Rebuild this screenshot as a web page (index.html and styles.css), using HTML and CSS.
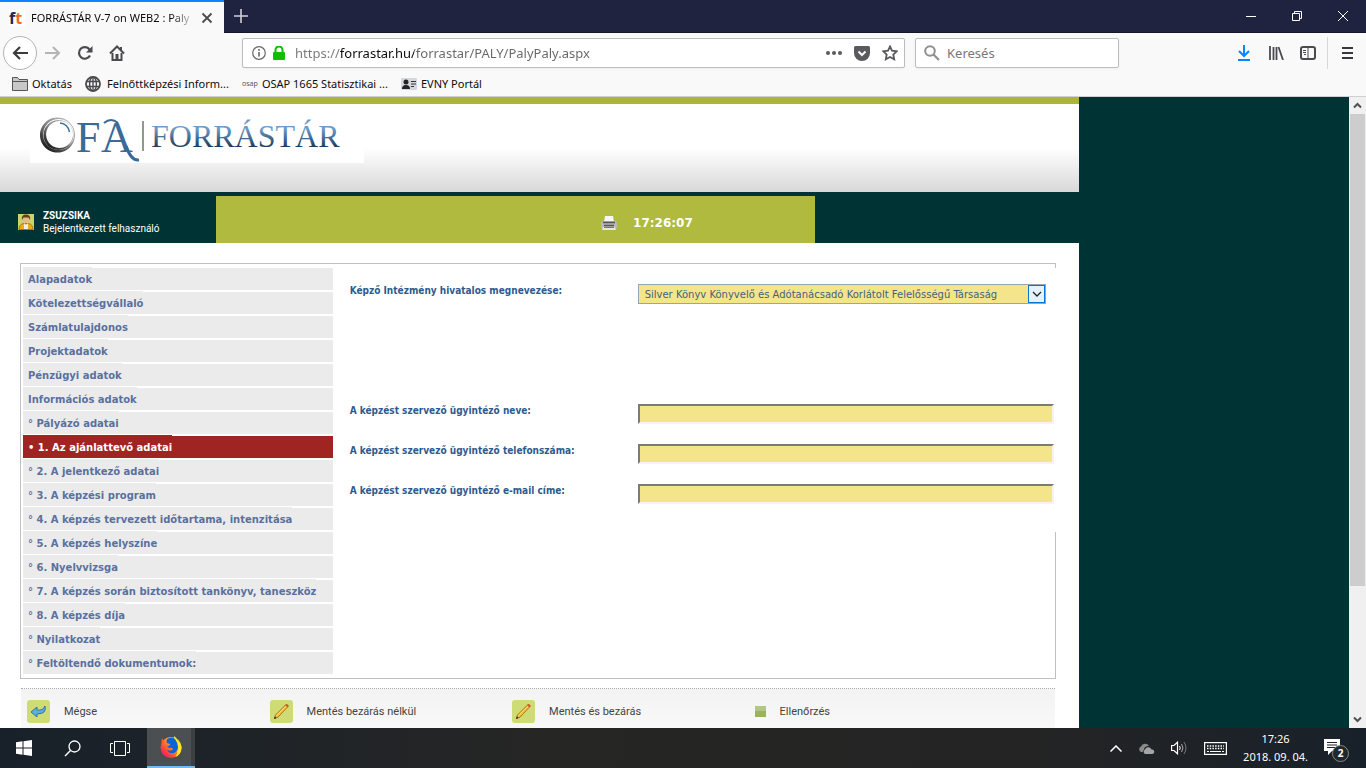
FILE: index.html
```html
<!DOCTYPE html>
<html lang="hu">
<head>
<meta charset="utf-8">
<title>FORRÁSTÁR V-7 on WEB2 : PalyPaly</title>
<link rel="stylesheet" href="styles.css">
</head>
<body>
<header class="titlebar">
  <div class="tab">
    <span class="favicon"><b class="fav-f">f</b><b class="fav-t">t</b></span>
    <span class="tab-title">FORRÁSTÁR V-7 on WEB2 : Paly</span>
    <button class="tab-close" aria-label="Lap bezárása"><svg width="12" height="12" viewBox="0 0 12 12"><path d="M1.500 1.500l9 9M10.500 1.500l-9 9" stroke="#4a4a4f" stroke-width="1.800" fill="none"/></svg></button>
  </div>
  <button class="new-tab" aria-label="Új lap"><svg width="14" height="14" viewBox="0 0 14 14"><path d="M7 0v14M0 7h14" stroke="#d0d0d8" stroke-width="1.600"/></svg></button>
  <div class="window-buttons">
    <button aria-label="Kis méret"><svg width="10" height="10" viewBox="0 0 10 10"><path d="M0 5.500h10" stroke="#fff"/></svg></button>
    <button aria-label="Előző méret"><svg width="10" height="10" viewBox="0 0 10 10"><path d="M.5 2.500h7v7h-7zM2.500 2V.5h7v7H8" stroke="#fff" fill="none"/></svg></button>
    <button aria-label="Bezárás"><svg width="10" height="10" viewBox="0 0 10 10"><path d="M0 0l10 10M10 0L0 10" stroke="#fff"/></svg></button>
  </div>
</header>
<nav class="toolbar">
  <button class="back" aria-label="Vissza"><svg width="16" height="16" viewBox="0 0 16 16"><path d="M16 8H2M8 2L2 8l6 6" fill="none" stroke="#3c3c40" stroke-width="2.200"/></svg></button>
  <button class="tool" aria-label="Előre"><svg width="16" height="16" viewBox="0 0 16 16"><path d="M0 8h14M8 2l6 6-6 6" fill="none" stroke="#b4b4b6" stroke-width="2"/></svg></button>
  <button class="tool" aria-label="Frissítés"><svg width="16" height="16" viewBox="0 0 16 16"><path d="M13 10.500A5.800 5.800 0 1 1 12.500 4.500" fill="none" stroke="#4a4a4f" stroke-width="2.200"/><path d="M15.500 1v6.500H9z" fill="#4a4a4f"/></svg></button>
  <button class="tool" aria-label="Kezdőlap"><svg width="16" height="16" viewBox="0 0 16 16"><path d="M1 8.500L8 1.500l7 7" fill="none" stroke="#4a4a4f" stroke-width="2"/><path d="M3.500 8v7h9V8M12 2v3" fill="none" stroke="#4a4a4f" stroke-width="2"/><path d="M6.500 9h3v5h-3z" fill="#4a4a4f"/></svg></button>
  <div class="urlbar">
    <svg width="14" height="14" viewBox="0 0 14 14"><circle cx="7" cy="7" r="6.300" fill="none" stroke="#66666a" stroke-width="1.200"/><path d="M7 6v4.500M7 3v1.700" stroke="#66666a" stroke-width="1.600"/></svg>
    <svg width="12" height="14" viewBox="0 0 12 14"><rect y="6" width="12" height="8" rx="1" fill="#12bc00"/><path d="M2.500 7V4a3.500 3.500 0 0 1 7 0v3" fill="none" stroke="#12bc00" stroke-width="2"/></svg>
    <input class="url" type="text" value="https://forrastar.hu/forrastar/PALY/PalyPaly.aspx" aria-label="Cím">
    <svg width="16" height="4" viewBox="0 0 16 4"><g fill="#5a5a5e"><circle cx="2" cy="2" r="2"/><circle cx="8" cy="2" r="2"/><circle cx="14" cy="2" r="2"/></g></svg>
    <svg width="16" height="15" viewBox="0 0 16 15"><path d="M1.500 0h13Q16 0 16 1.500V7a8 8 0 0 1-16 0V1.500Q0 0 1.500 0z" fill="#5a5a5e"/><path d="M4.500 5.500L8 9l3.500-3.500" fill="none" stroke="#fff" stroke-width="2"/></svg>
    <svg width="16" height="16" viewBox="0 0 16 16"><path d="M8 1.500l2 4.200 4.700.6-3.400 3.200.9 4.800L8 12l-4.200 2.300.9-4.800L1.300 6.300 6 5.700z" fill="none" stroke="#5a5a5e" stroke-width="1.800"/></svg>
  </div>
  <div class="searchbar">
    <svg width="16" height="16" viewBox="0 0 16 16"><circle cx="6" cy="6" r="4.800" fill="none" stroke="#8f8f92" stroke-width="2"/><path d="M9.500 9.500L15 15" stroke="#8f8f92" stroke-width="2.200"/></svg>
    <input type="search" placeholder="Keresés" aria-label="Keresés">
  </div>
  <div class="tools-right">
    <button aria-label="Letöltések"><svg width="12" height="16" viewBox="0 0 12 16"><path d="M6 0v11M1 6l5 5 5-5M0 15h12" fill="none" stroke="#0a84ff" stroke-width="2"/></svg></button>
    <button aria-label="Könyvtár"><svg width="15" height="14" viewBox="0 0 15 14"><path d="M1 0v14M4.500 1v13M7.500 1v13M9.500 1L14 14" stroke="#4a4a4f" stroke-width="1.800"/></svg></button>
    <button aria-label="Oldalsáv"><svg width="16" height="14" viewBox="0 0 16 14"><rect x="1" y="1" width="14" height="12" rx="2" fill="none" stroke="#4a4a4f" stroke-width="2"/><path d="M8 2v10M3 4.500h3M3 6.500h3M4 8.500h2" stroke="#4a4a4f"/></svg></button>
    <button class="menu-button" aria-label="Menü"><svg width="11" height="12" viewBox="0 0 11 12"><path d="M0 1h11M0 6h11M0 11h11" stroke="#38383d" stroke-width="2"/></svg></button>
  </div>
</nav>
<nav class="bookmarks">
  <a href="#"><svg width="16" height="14" viewBox="0 0 16 14"><path d="M.5 13.500V.5h5l1.500 2h8.500v11z" fill="#c8c8c8" stroke="#555"/><path d="M1 4.500h14" stroke="#555"/></svg>Oktatás</a>
  <a href="#" class="bm-globe"><svg width="16" height="16" viewBox="0 0 16 16"><g fill="none" stroke="#4a4a4f" stroke-width="1.400"><circle cx="8" cy="8" r="7" stroke-width="1.800"/><ellipse cx="8" cy="8" rx="3.400" ry="7"/><path d="M1 5.500h14M1 10.500h14M8 1v14"/></g></svg>Felnőttképzési Inform...</a>
  <a href="#"><span class="osap">osap</span>OSAP 1665 Statisztikai ...</a>
  <a href="#"><svg width="16" height="12" viewBox="0 0 16 12"><rect width="16" height="12" rx="1" fill="#d4d8de"/><circle cx="5" cy="4" r="2.500" fill="#222"/><path d="M1 11q0-4 4-4t4 4z" fill="#222"/><path d="M10 3.500h5M10 6h5M10 8.500h3" stroke="#333"/></svg>EVNY Portál</a>
</nav>
<div class="viewport">
  <div class="page">
    <header class="site-header">
      <svg class="logo" width="334" height="59" viewBox="0 0 334 59" role="img" aria-label="OFA Forrástár">
        <defs>
          <linearGradient id="word" x1="0" y1="0" x2="0" y2="1"><stop offset=".3" stop-color="#6f9bc8"/><stop offset=".8" stop-color="#1b3c5e"/></linearGradient>
          <linearGradient id="ring" x1="1" y1="0" x2=".2" y2="1"><stop offset="0" stop-color="#ccc"/><stop offset=".5" stop-color="#888"/><stop offset="1" stop-color="#111"/></linearGradient>
        </defs>
        <rect width="334" height="59" fill="#fff"/>
        <path fill="url(#ring)" fill-rule="evenodd" d="M27.500 13.500a17.500 17.500 0 1 1-.1 0zM28.500 15a15.500 15.500 0 1 0 .1 0z"/>
        <path fill="url(#ring)" fill-rule="evenodd" d="M28.500 16a15 15 0 1 1-.1 0zM29.500 17a13.500 13.500 0 1 0 .1 0z"/>
        <path d="M30 19q8 1 9.500 9" fill="none" stroke="#3b6e9e" stroke-width="1.500"/>
        <text class="logo-mark" x="46" y="48">F</text>
        <text class="logo-mark" x="71" y="48">A</text>
        <path d="M74 19q7-6 14 0" fill="none" stroke="#3a6a98" stroke-width="2"/>
        <path d="M96 42q5 15 13 14" fill="none" stroke="#3a6a98" stroke-width="3"/>
        <path d="M113 17v30" stroke="#8f9a8f" stroke-width="2"/>
        <text class="logo-word" x="121" y="43" fill="url(#word)">FORRÁSTÁR</text>
      </svg>
    </header>
    <div class="status">
      <div class="user">
        <svg width="16" height="16" viewBox="0 0 16 16"><rect width="16" height="16" fill="#cbd468"/><path d="M1 15.500q0-5 4.500-6h5q4.500 1 4.500 6z" fill="#e5ad1d" stroke="#9b6612" stroke-width=".8"/><path d="M6 9l2 2 2-2v6H6z" fill="#eee"/><circle cx="8" cy="5.500" r="3.500" fill="#e8b98a"/><path d="M4 6q-1-5.500 4-5.500T12 6L10.500 3.500h-5z" fill="#65401b"/></svg>
        <div><strong>ZSUZSIKA</strong><span>Bejelentkezett felhasználó</span></div>
      </div>
      <div class="clock-bar">
        <button aria-label="Nyomtatás"><svg width="16" height="14" viewBox="0 0 16 14"><path d="M4 0h8l1 6H3z" fill="#f6f6f6"/><path d="M1 5h14l1 2v5H0V7z" fill="#b9b9b9"/><path d="M2 6.500h12M3 9.500h10" stroke="#555" stroke-width="1.500"/><path d="M2 11h12l1 3H1z" fill="#e8e8e8"/><path d="M3 11.500h10" stroke="#777"/></svg></button>
        <time>17:26:07</time>
      </div>
    </div>
    <main class="panel">
      <ul class="menu">
        <li><a href="#">Alapadatok</a></li>
        <li><a href="#">Kötelezettségvállaló</a></li>
        <li><a href="#">Számlatulajdonos</a></li>
        <li><a href="#">Projektadatok</a></li>
        <li><a href="#">Pénzügyi adatok</a></li>
        <li><a href="#">Információs adatok</a></li>
        <li><a href="#">° Pályázó adatai</a></li>
        <li class="active"><a href="#">• 1. Az ajánlattevő adatai</a></li>
        <li><a href="#">° 2. A jelentkező adatai</a></li>
        <li><a href="#">° 3. A képzési program</a></li>
        <li><a href="#">° 4. A képzés tervezett időtartama, intenzitása</a></li>
        <li><a href="#">° 5. A képzés helyszíne</a></li>
        <li><a href="#">° 6. Nyelvvizsga</a></li>
        <li><a href="#">° 7. A képzés során biztosított tankönyv, taneszköz</a></li>
        <li><a href="#">° 8. A képzés díja</a></li>
        <li><a href="#">° Nyilatkozat</a></li>
        <li><a href="#">° Feltöltendő dokumentumok:</a></li>
      </ul>
      <form class="form">
        <div class="field field-first">
          <label for="inst">Képző Intézmény hivatalos megnevezése:</label>
          <div class="select-wrap">
            <select id="inst"><option>Silver Könyv Könyvelő és Adótanácsadó Korlátolt Felelősségű Társaság</option></select>
            <span class="arrow"><svg width="10" height="6" viewBox="0 0 10 6"><path d="M1 1l4 4 4-4" fill="none" stroke="#222" stroke-width="1.300"/></svg></span>
          </div>
        </div>
        <div class="field"><label for="nev">A képzést szervező ügyintéző neve:</label><input id="nev" type="text"></div>
        <div class="field"><label for="tel">A képzést szervező ügyintéző telefonszáma:</label><input id="tel" type="text"></div>
        <div class="field"><label for="mail">A képzést szervező ügyintéző e-mail címe:</label><input id="mail" type="text"></div>
      </form>
    </main>
    <div class="actions">
      <button><svg class="icon" width="23" height="23" viewBox="0 0 23 23"><rect width="23" height="23" rx="3" fill="#cfdb74"/><path d="M4 12l6-5v3q6 1 8-4 2 8-8 8v3z" fill="#5ab0e4" stroke="#286c9c" stroke-width=".9"/></svg>Mégse</button>
      <button><svg class="icon" width="23" height="23" viewBox="0 0 23 23"><rect width="23" height="23" rx="3" fill="#cfdb74"/><path d="M4.500 18.500L5.500 15 16.500 4l2 2L8 17.200z" fill="#f3b92b" stroke="#8a5a10" stroke-width=".7"/><path d="M6.500 15.800L16.500 5.800" stroke="#ffe98a"/><path d="M16.500 4l2 2-1.200 1.200-2-2z" fill="#e0492c"/><path d="M4 19l.8-2.500L6.500 18z" fill="#222"/></svg>Mentés bezárás nélkül</button>
      <button><svg class="icon" width="23" height="23" viewBox="0 0 23 23"><rect width="23" height="23" rx="3" fill="#cfdb74"/><path d="M4.500 18.500L5.500 15 16.500 4l2 2L8 17.200z" fill="#f3b92b" stroke="#8a5a10" stroke-width=".7"/><path d="M6.500 15.800L16.500 5.800" stroke="#ffe98a"/><path d="M16.500 4l2 2-1.200 1.200-2-2z" fill="#e0492c"/><path d="M4 19l.8-2.500L6.500 18z" fill="#222"/></svg>Mentés és bezárás</button>
      <button class="check"><svg width="11" height="11" viewBox="0 0 11 11"><rect width="11" height="11" fill="#9cb35d"/><rect width="11" height="5" fill="#b3c687"/></svg>Ellenőrzés</button>
    </div>
  </div>
  <div class="scrollbar">
    <svg width="17" height="17" viewBox="0 0 17 17"><path d="M5 10.500l3.500-3.500 3.500 3.500" fill="none" stroke="#505050" stroke-width="2"/></svg>
    <div class="track"><div class="thumb"></div></div>
    <svg width="17" height="17" viewBox="0 0 17 17"><path d="M5 6.500l3.500 3.500 3.500-3.500" fill="none" stroke="#505050" stroke-width="2"/></svg>
  </div>
</div>
<footer class="taskbar">
  <button aria-label="Start"><svg width="16" height="16" viewBox="0 0 16 16"><path d="M0 2.300L6.500 1.300V7.500H0zM7.500 1.200L16 0v7.500H7.500zM0 8.500h6.500v6.200L0 13.700zM7.500 8.500H16V16l-8.500-1.200z" fill="#fff"/></svg></button>
  <button aria-label="Keresés"><svg width="17" height="17" viewBox="0 0 17 17"><circle cx="10.500" cy="6.500" r="5.500" fill="none" stroke="#fff" stroke-width="1.300"/><path d="M6.500 10.500L1 16" stroke="#fff" stroke-width="1.500"/></svg></button>
  <button aria-label="Feladatnézet"><svg width="20" height="15" viewBox="0 0 20 15"><path d="M4.500.5h11v14h-11zM3 2.500H.5v9H3M17 2.500h2.500v9H17" fill="none" stroke="#fff"/></svg></button>
  <button class="running" aria-label="Firefox"><svg width="24" height="24" viewBox="0 0 24 24"><defs><linearGradient id="fox" x1="1" y1="0" x2="0" y2="1"><stop offset="0" stop-color="#fff44f"/><stop offset=".4" stop-color="#ff9a1f"/><stop offset=".75" stop-color="#ff3647"/><stop offset="1" stop-color="#e31587"/></linearGradient></defs><circle cx="12" cy="12.500" r="10.500" fill="url(#fox)"/><path d="M2.500 8Q2 5 3.500 3q0 2 1.500 3z" fill="#ff5a2b"/><path d="M15 1q3 2 4 5 4 3 3.500 8-1 6-6 8 3-5 1-10-3-4-2.500-11z" fill="#ffe52e"/><path d="M8 4q5-3 8 0 3 4 3 8 0 4-4 6-5 1-7-3 5 2 6-1-1-2-4-1l-2-2q3 0 3-2l-3-1q-1-2 0-4z" fill="#0b63d8"/></svg></button>
  <div class="tray">
    <svg width="12" height="7" viewBox="0 0 12 7"><path d="M.5 6.500L6 1l5.500 5.500" fill="none" stroke="#fff" stroke-width="1.500"/></svg>
    <svg width="17" height="11" viewBox="0 0 17 11"><path d="M3 9a3 3 0 0 1 0-5.500A4.500 4.500 0 0 1 11 3Q6 3 6 7q-2 1-1 2z" fill="#8b8b8b"/><path d="M7 11a2.500 2.500 0 0 1 0-4.500 3.500 3.500 0 0 1 6.500 0A2.300 2.300 0 0 1 14.500 11z" fill="#a5a5a5"/></svg>
    <svg width="17" height="14" viewBox="0 0 17 14"><path d="M.6 4.500H3l3.500-3.300v11.600L3 9.500H.6z" fill="none" stroke="#fff" stroke-width="1.200"/><path d="M8.500 5q1.500 2 0 4" stroke="#fff" fill="none"/><path d="M10.500 3q3 4 0 8" fill="none" stroke="#aaa"/><path d="M13 1q4 6 0 12" fill="none" stroke="#777"/></svg>
    <svg width="23" height="13" viewBox="0 0 23 13"><rect x=".6" y=".6" width="21.800" height="11.800" fill="none" stroke="#fff" stroke-width="1.200"/><path d="M3 4h17M3 6.500h17" stroke="#fff" stroke-width="1.300" stroke-dasharray="1.500 1.200"/><path d="M3 9.500h2M6 9.500h11M18 9.500h2" stroke="#fff"/></svg>
    <time class="date"><span>17:26</span><span>2018. 09. 04.</span></time>
    <div class="notify">
      <svg width="16" height="17" viewBox="0 0 16 17"><path d="M0 0h16v12H8l-4 4v-4H0z" fill="#fff"/><path d="M3 3.500h10M3 6h10M3 8.500h10" stroke="#1d2228"/></svg>
      <span class="badge">2</span>
    </div>
  </div>
</footer>
</body>
</html>
```
FILE: styles.css
```css
* { box-sizing: border-box; }
body {
  margin: 0;
  height: 100vh;
  display: flex;
  flex-direction: column;
  overflow: hidden;
  font-family: "Noto Sans", sans-serif;
  font-size: 11px;
  color: #0c0c0d;
}
button {
  display: flex;
  align-items: center;
  justify-content: center;
  padding: 0;
  border: 0;
  background: none;
  font: inherit;
  color: inherit;
}
a { color: inherit; text-decoration: none; }
svg { display: block; flex: none; }
input { min-width: 0; font: inherit; }

.titlebar { display: flex; height: 33px; background: #202340; border-bottom: 1px solid #14162b; }
.tab {
  display: flex;
  align-items: center;
  width: 224px;
  height: 33px;
  padding: 0 10px 0 9px;
  border-top: 2px solid #0a84ff;
  background: #f9f9fa;
}
.favicon { width: 16px; margin-right: 6px; background: #fff; font-size: 16px; line-height: 16px; white-space: nowrap; }
.fav-f { color: #2b2260; }
.fav-t { color: #ee6c22; }
.tab-title {
  flex: 1;
  white-space: nowrap;
  mask-image: linear-gradient(90deg, #000 85%, transparent);
}
.tab-close { width: 14px; margin-left: 4px; }
.new-tab { width: 34px; }
.window-buttons { display: flex; margin-left: auto; }
.window-buttons button { width: 46px; }

.toolbar { display: flex; align-items: center; flex: none; height: 40px; padding-left: 3px; background: #f9f9fa; }
.back { width: 34px; height: 34px; border: 1px solid #b4b4b6; border-radius: 50%; background: #fff; }
.tool { width: 32px; height: 32px; }
.urlbar, .searchbar {
  display: flex;
  align-items: center;
  height: 30px;
  border: 1px solid #bdbdbf;
  border-radius: 2px;
  background: #fff;
  box-shadow: 0 1px 3px #0000000d;
}
.urlbar { flex: 1; gap: 12px; margin-left: 109px; padding: 0 6px 0 9px; }
.urlbar svg:nth-child(2) { margin-left: -5px; }
.url, .searchbar input { flex: 1; border: 0; padding: 0; outline: 0; background: none; font-size: 13px; }
.url {
  margin-left: -2px;
  color: transparent;
  background: linear-gradient(90deg, #77777a 45px, #0c0c0d 45px, #0c0c0d 119px, #66666a 119px);
  background-clip: text;
}
.searchbar { width: 204px; gap: 7px; margin-left: 10px; padding: 0 8px; }
.searchbar input::placeholder { color: #77777a; opacity: 1; }
.tools-right { display: flex; align-items: center; margin-left: 109px; }
.tools-right button { width: 32px; height: 32px; }
.tools-right .menu-button { width: 39px; margin-left: 3px; border-left: 1px solid #d7d7db; }

.bookmarks {
  display: flex;
  gap: 13px;
  flex: none;
  height: 24px;
  padding: 0 12px 2px;
  background: #f9f9fa;
  border-bottom: 1px solid #d0d0d2;
}
.bookmarks a { display: flex; align-items: center; gap: 4px; }
.bookmarks .bm-globe { gap: 6px; }
.osap { width: 16px; font-size: 7px; color: #555; }

.viewport { flex: 1; min-height: 0; display: flex; justify-content: space-between; background: #003333; }
.page { width: 79%; overflow: hidden; background: #fff; }
.site-header {
  height: 95px;
  padding: 0 30px;
  border-top: 7px solid #abb636;
  background: linear-gradient(#fff 50%, #d8d8d8);
}
.logo-mark { font-family: "Liberation Serif", serif; font-size: 44px; fill: #3a6a98; }
.logo-word { font-family: "Liberation Serif", serif; font-size: 32px; }
.status { display: flex; height: 51px; padding-top: 4px; background: #003333; }
.user { display: flex; align-items: center; gap: 9px; width: 20%; padding: 4px 0 0 18px; color: #fff; font: 10px/13px Roboto, sans-serif; }
.user div { display: grid; }
.clock-bar {
  display: flex;
  align-items: center;
  justify-content: flex-end;
  gap: 16px;
  width: 56%;
  max-width: 599px;
  padding: 7px 122px 0 0;
  background: #afba3f;
  color: #fff;
  font: bold 12px "DejaVu Sans", sans-serif;
}

.panel {
  display: flex;
  align-items: flex-start;
  margin: 20px 23px 9px 20px;
  padding: 4px 0 4px 2px;
  border: 1px solid #c0c0c0;
}
.menu {
  display: grid;
  gap: 2px;
  width: 30%;
  margin: 0;
  padding: 0;
  list-style: none;
  font: bold 10px/22px "DejaVu Sans", sans-serif;
  color: #5a70a0;
  white-space: nowrap;
}
.menu li { height: 22px; background: #ebebeb; }
.menu a { display: inline-block; height: 23px; margin-top: -1px; padding: 2px 0 0 5px; line-height: 21px; background: #ebebeb; vertical-align: top; }
.menu .active, .menu .active a { background: #a02422; color: #fff; }
.form {
  flex: 1;
  margin-right: -1px;
  height: 264px;
  padding: 16px 2px 0 17px;
  background: #fff;
  font-family: "DejaVu Sans", sans-serif;
  font-size: 10px;
}
.field { display: flex; height: 40px; }
.field-first { height: 120px; padding-right: 8px; }
.field label { flex: 0 0 288px; line-height: 14px; font-family: "DejaVu Sans Condensed", "DejaVu Sans", sans-serif; font-weight: bold; color: #2f5a8c; }
.field input { flex: 1; height: 20px; border: 2px solid; border-color: #7b7b7b #f4f4f4 #f4f4f4 #7b7b7b; background: #f4e58a; }
.select-wrap { position: relative; flex: 1; min-width: 0; height: 20px; }
select {
  appearance: none;
  width: 100%;
  height: 20px;
  padding: 0 20px 0 6px;
  border: 1px solid #98a3b3;
  border-radius: 0;
  background: #f4e58a;
  color: #45617c;
  font: 10px "DejaVu Sans", sans-serif;
}
.arrow {
  position: absolute;
  top: 1px;
  right: 1px;
  display: grid;
  place-items: center;
  width: 17px;
  height: 18px;
  border: 1px solid #0078d7;
  background: #e5f1fb;
  pointer-events: none;
}
.actions {
  display: grid;
  grid-template-columns: repeat(4, 1fr);
  height: 60px;
  align-items: start;
  margin: 0 24px 0 21px;
  padding: 11px 58px 0 6px;
  border-top: 1px dotted #aaa;
  background: linear-gradient(#f3f3f3, #fbfbfb);
  color: #444;
  font-family: Roboto, sans-serif;
}
.actions button { justify-content: flex-start; gap: 14px; height: 23px; }

.scrollbar { display: flex; flex-direction: column; width: 17px; background: #f0f0f0; }
.track { flex: 1; padding: 0 1px; }
.thumb { height: 79%; background: #cdcdcd; }

.taskbar {
  display: flex;
  flex: none;
  height: 40px;
  background: linear-gradient(90deg, #18212a, #262625 40%, #242424 75%, #18212a);
  color: #fff;
}
.taskbar > button { width: 48px; }
.taskbar > button.running { margin-left: 3px; border-bottom: 2px solid #76b9ed; background: #4b4f52; box-shadow: inset -4px 0 #3c3f42; }
.tray { display: flex; align-items: center; gap: 16px; margin-left: auto; padding-right: 17px; }
.date { display: grid; line-height: 18px; text-align: center; }
.notify { position: relative; width: 25px; padding-bottom: 2px; }
.badge {
  position: absolute;
  left: 8px;
  top: 6px;
  width: 17px;
  height: 17px;
  border: 1px solid #888;
  border-radius: 50%;
  background: #22272c;
  font-size: 10px;
  line-height: 15px;
  font-weight: bold;
  text-align: center;
}
```
